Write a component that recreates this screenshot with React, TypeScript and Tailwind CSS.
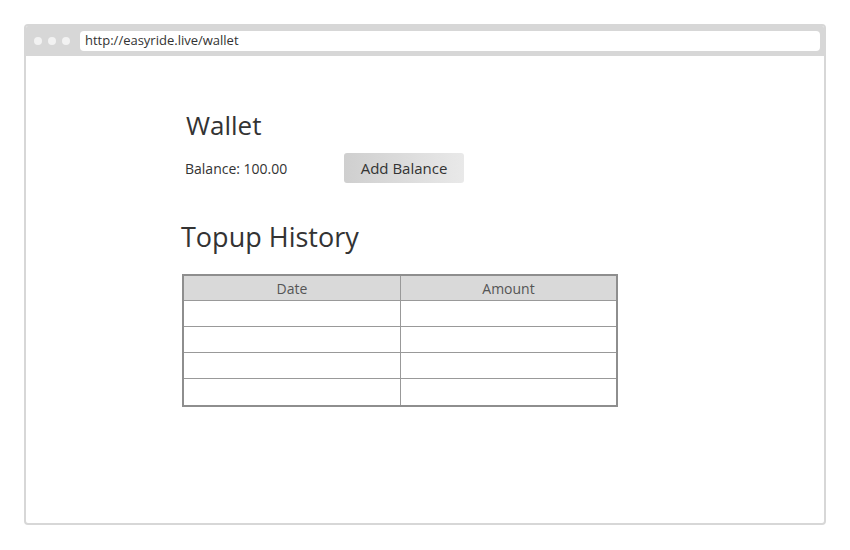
const rows = [1, 2, 3, 4];

const App = () => {
  return (
    <div className="w-[850px] h-[550px] bg-white pt-6 pl-6 font-['Open_Sans',sans-serif] text-[#333]">
      <div className="w-[802px] h-[501px] border-2 border-[#d7d7d7] rounded-[4px] overflow-hidden flex flex-col">
        <div className="h-[30px] bg-[#d7d7d7] flex items-center pl-[8px] pr-[4px]">
          <div className="flex gap-[6px]">
            <span className="w-[8px] h-[8px] rounded-full bg-[#f2f2f2]" />
            <span className="w-[8px] h-[8px] rounded-full bg-[#f2f2f2]" />
            <span className="w-[8px] h-[8px] rounded-full bg-[#f2f2f2]" />
          </div>
          <div className="ml-[10px] flex-1 h-[20px] bg-white rounded-[4px] flex items-center pl-[5px] text-[13px] text-[#333]">
            http://easyride.live/wallet
          </div>
        </div>

        <div className="pl-[155px] pt-[52px]">
          <h1 className="pl-[5px] text-[26px] leading-[34px] text-[#333]">Wallet</h1>
          <div className="mt-[11px] flex items-center">
            <span className="pl-[4px] w-[163px] text-[14px]">Balance: 100.00</span>
            <button className="w-[120px] h-[30px] rounded-[3px] bg-gradient-to-r from-[#cfcfcf] to-[#e9e9e9] text-[15px] text-[#333]">
              Add Balance
            </button>
          </div>

          <h2 className="mt-[36px] text-[27px] leading-[36px] text-[#333]">Topup History</h2>

          <div className="mt-[19px] ml-[1px] w-[436px] border-2 border-[#8e8e8e]">
            <div className="grid grid-cols-[217px_1fr] h-[25px] bg-[#d9d9d9] border-b border-[#999] text-[14px] text-[#555]">
              <div className="flex items-center justify-center border-r border-[#999]">Date</div>
              <div className="flex items-center justify-center">Amount</div>
            </div>
            {rows.map(r => (
              <div key={r} className="grid grid-cols-[217px_1fr] h-[26px] border-b border-[#999] last:border-b-0">
                <div className="border-r border-[#999]" />
                <div />
              </div>
            ))}
          </div>
        </div>
      </div>
    </div>
  );
};

export default App;
